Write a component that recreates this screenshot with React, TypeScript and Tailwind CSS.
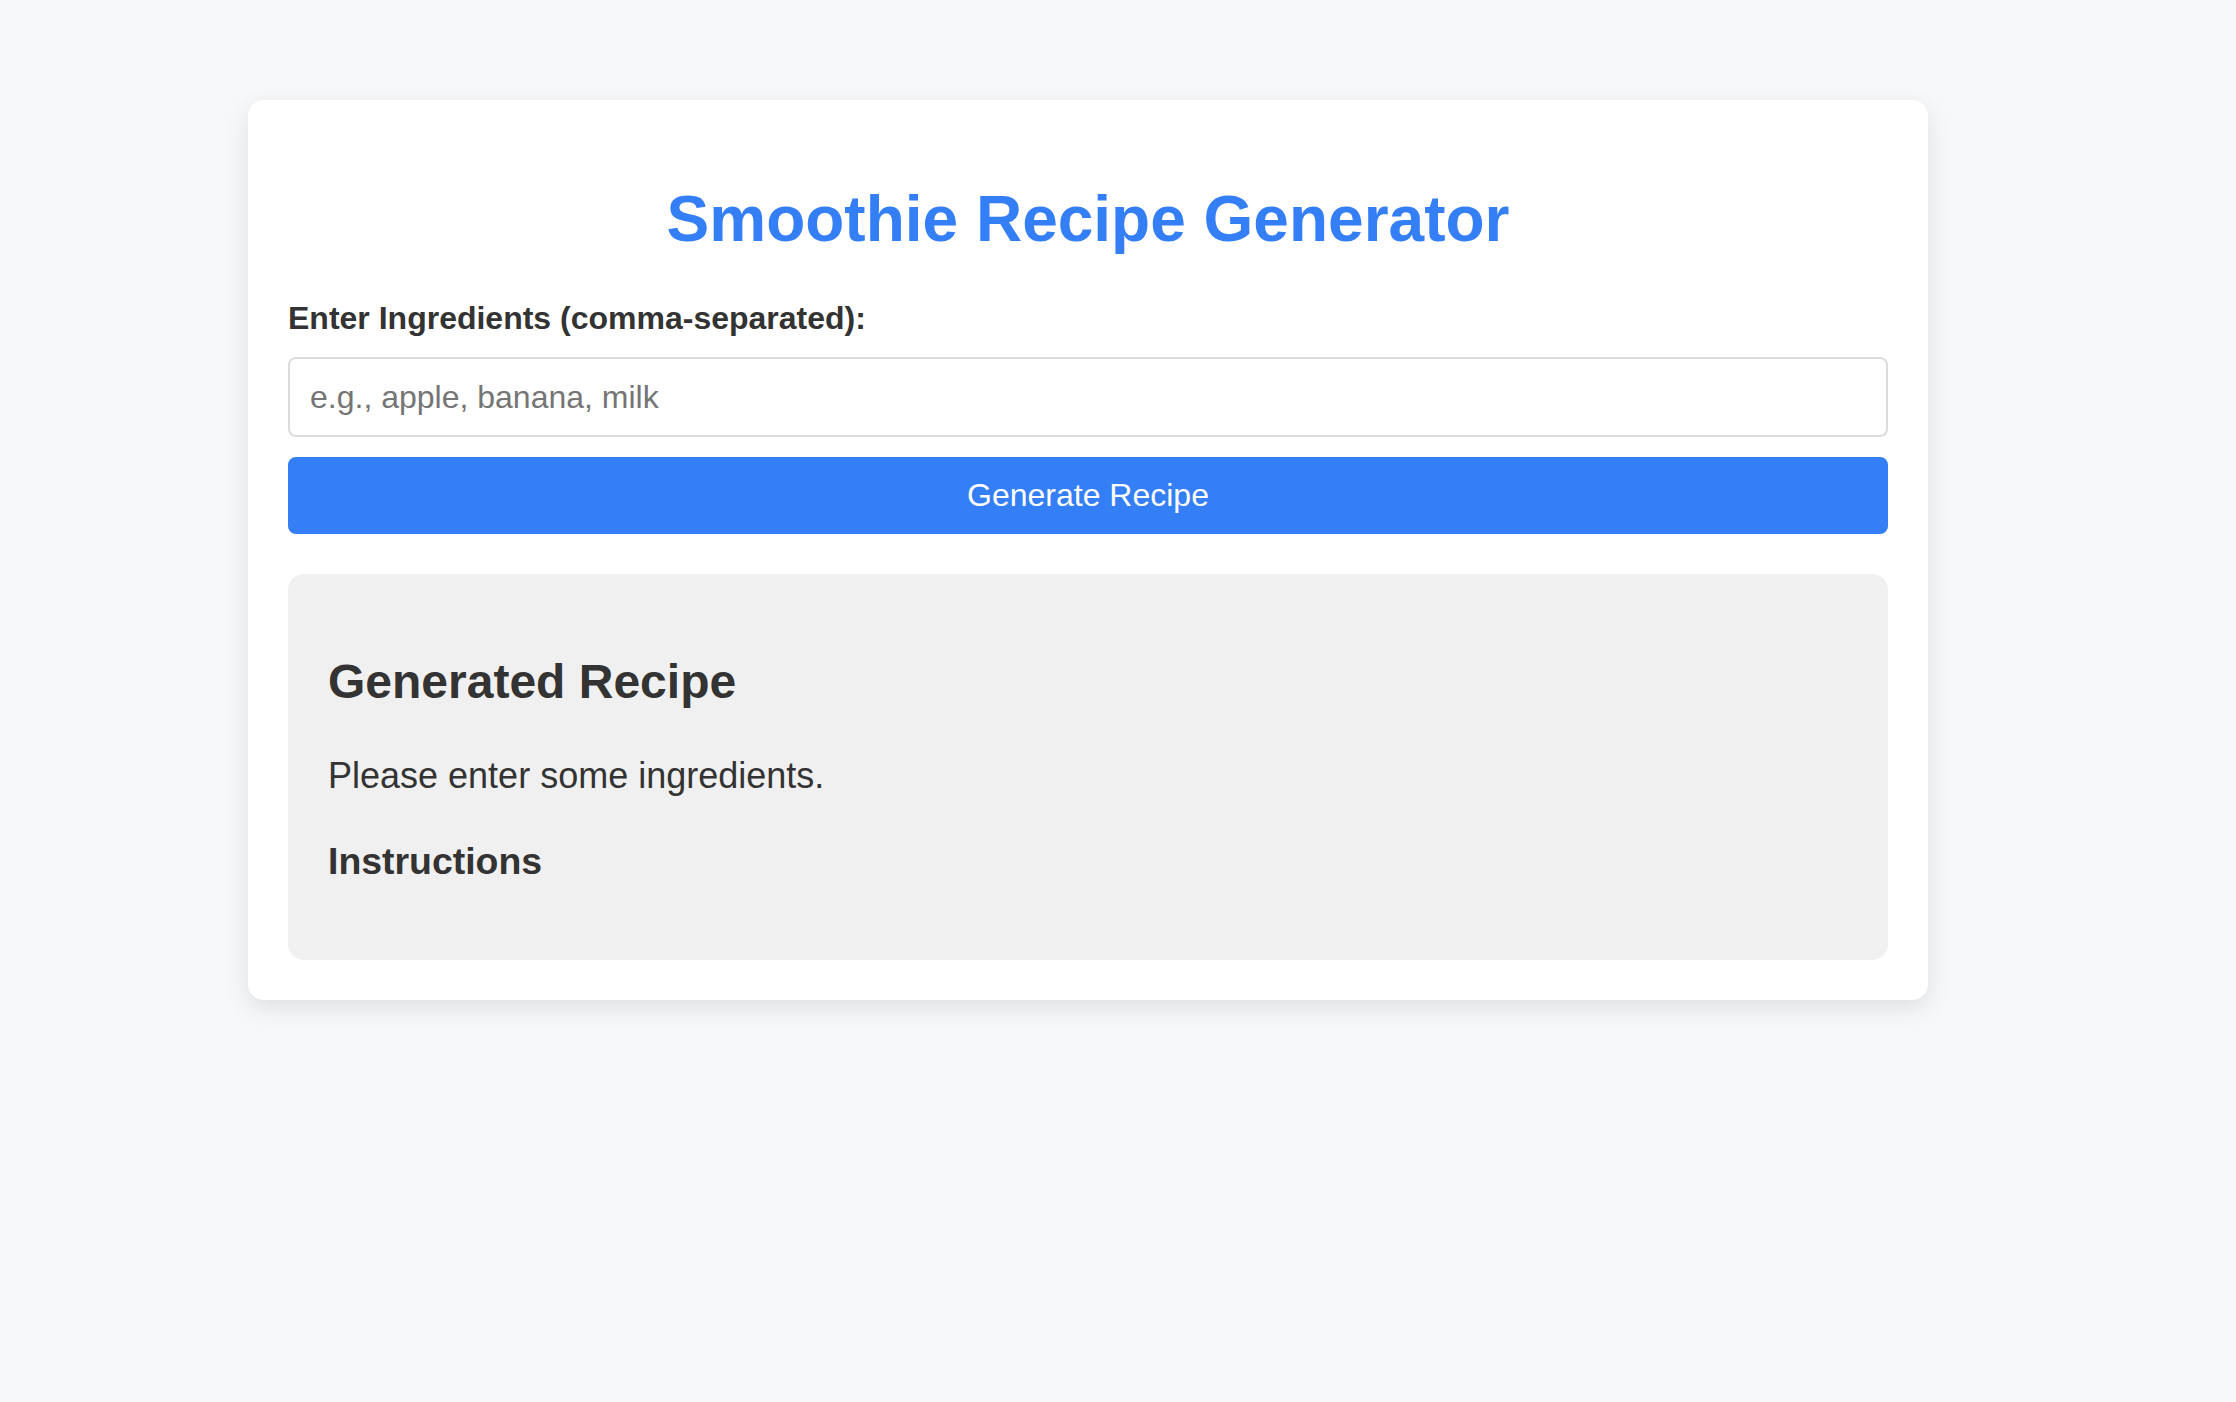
import React from "react";

export default function App() {
  return (
    <div className="min-h-screen bg-[#f7f8fa] pt-[100px] pl-[248px] font-['Liberation_Sans',Arial,sans-serif] text-[#333333]">
      <div className="w-[1680px] bg-white rounded-[16px] shadow-[0_8px_24px_rgba(0,0,0,0.1)] p-[40px] flex flex-col">
        <h1 className="mt-[43px] mb-[43px] text-center text-[64px] font-bold leading-[1.15] text-[#347ef6]">
          Smoothie Recipe Generator
        </h1>
        <label htmlFor="ingredients" className="block text-[32px] font-bold leading-[1.15] mb-[21px]">
          Enter Ingredients (comma-separated):
        </label>
        <input
          id="ingredients"
          type="text"
          placeholder="e.g., apple, banana, milk"
          className="h-[80px] w-full border-2 border-[#dcdcdc] rounded-[8px] px-[20px] text-[32px] text-[#333333] placeholder:text-[#757575] outline-none bg-white"
        />
        <button className="mt-[20px] h-[77px] w-full rounded-[8px] bg-[#347ef6] text-white text-[32px] leading-[1.15]">
          Generate Recipe
        </button>
        <div className="mt-[40px] bg-[#f0f0f0] rounded-[16px] p-[40px] flex flex-col">
          <h2 className="mt-[40px] text-[48px] font-bold leading-[1.15]">Generated Recipe</h2>
          <p className="mt-[45px] text-[36px] leading-[1.15]">Please enter some ingredients.</p>
          <h3 className="mt-[44px] mb-[37px] text-[37.44px] font-bold leading-[1.15]">Instructions</h3>
        </div>
      </div>
    </div>
  );
}
